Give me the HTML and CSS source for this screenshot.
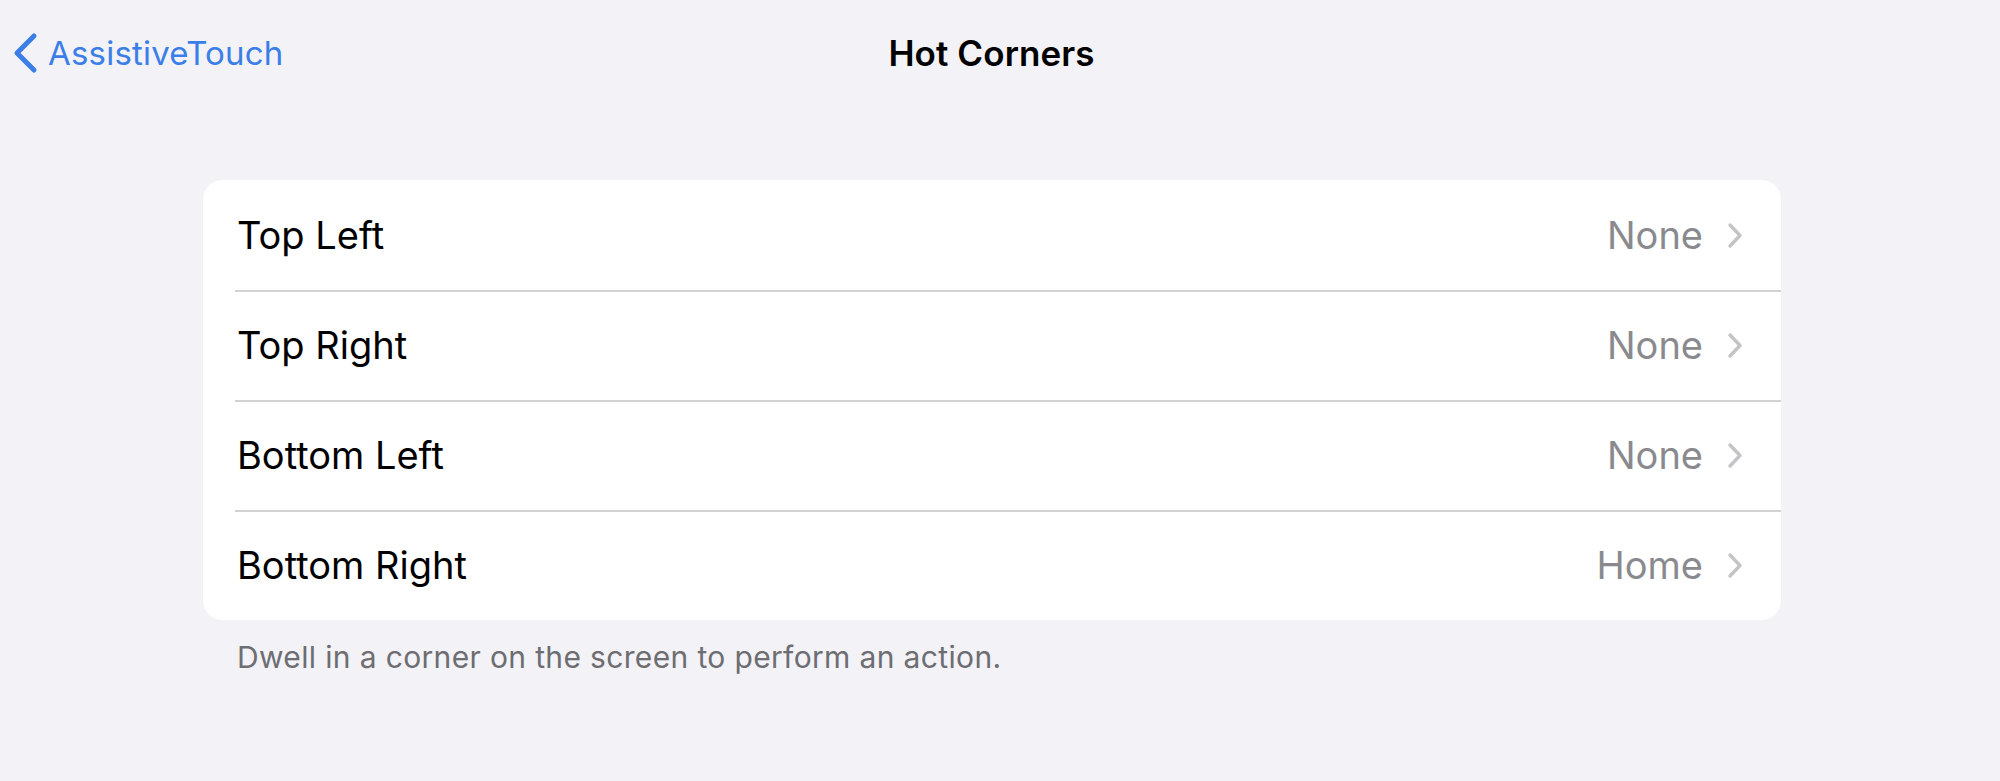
FILE: index.html
```html
<!DOCTYPE html>
<html>
<head>
<meta charset="utf-8">
<link rel="stylesheet" href="styles.css">
</head>
<body>
<header class="nav">
  <a class="back">
    <svg class="back-chev" width="26" height="42" viewBox="0 0 26 42"><path d="M22 4 L5 21 L22 38" fill="none" stroke="#3b7ee8" stroke-width="5" stroke-linecap="round" stroke-linejoin="round"/></svg>
    <span class="back-label">AssistiveTouch</span>
  </a>
  <h1 class="title">Hot Corners</h1>
</header>
<main class="content">
  <section class="card">
    <div class="row"><span class="label">Top Left</span><span class="value">None</span><svg class="chev" width="16" height="27" viewBox="0 0 16 27"><path d="M3 3 L13 13.5 L3 24" fill="none" stroke="#c4c4c7" stroke-width="3.4" stroke-linecap="round" stroke-linejoin="round"/></svg></div>
    <div class="row"><span class="label">Top Right</span><span class="value">None</span><svg class="chev" width="16" height="27" viewBox="0 0 16 27"><path d="M3 3 L13 13.5 L3 24" fill="none" stroke="#c4c4c7" stroke-width="3.4" stroke-linecap="round" stroke-linejoin="round"/></svg></div>
    <div class="row"><span class="label">Bottom Left</span><span class="value">None</span><svg class="chev" width="16" height="27" viewBox="0 0 16 27"><path d="M3 3 L13 13.5 L3 24" fill="none" stroke="#c4c4c7" stroke-width="3.4" stroke-linecap="round" stroke-linejoin="round"/></svg></div>
    <div class="row"><span class="label">Bottom Right</span><span class="value">Home</span><svg class="chev" width="16" height="27" viewBox="0 0 16 27"><path d="M3 3 L13 13.5 L3 24" fill="none" stroke="#c4c4c7" stroke-width="3.4" stroke-linecap="round" stroke-linejoin="round"/></svg></div>
  </section>
  <p class="footer">Dwell in a corner on the screen to perform an action.</p>
</main>
</body>
</html>
```
FILE: styles.css
```css
html, body {
  margin: 0;
  padding: 0;
  background: #f2f2f7;
  font-family: Inter, "Noto Sans", sans-serif;
  width: 2000px;
  height: 781px;
  overflow: hidden;
}
.nav {
  position: relative;
  height: 106px;
  display: flex;
  align-items: center;
  justify-content: center;
}
.back {
  position: absolute;
  left: 12px;
  top: 32px;
  display: flex;
  align-items: center;
  gap: 10px;
  color: #3b7ee8;
}
.back-chev { display: block; }
.back-label {
  font-size: 33px;
  letter-spacing: 0.2px;
  line-height: 42px;
}
.title {
  margin: 0 17px 0 0;
  font-size: 35px;
  font-weight: 600;
  color: #000;
  letter-spacing: 0.1px;
}
.content {
  padding: 74px 219px 0 203px;
}
.card {
  background: #fff;
  border-radius: 20px;
  overflow: hidden;
}
.row {
  height: 110px;
  display: flex;
  align-items: center;
  padding: 0 38px 0 34px;
  position: relative;
}
.row + .row::before {
  content: "";
  position: absolute;
  left: 32px;
  right: 0;
  top: 0;
  height: 1.5px;
  background: #d3d3d6;
}
.label {
  flex: 1;
  font-size: 38px;
  color: #000;
}
.value {
  font-size: 38px;
  color: #8a8a8e;
  margin-right: 24px;
}
.chev { display: block; }
.footer {
  margin: 19px 0 0 34px;
  font-size: 30px;
  letter-spacing: 0.35px;
  color: #6d6d72;
}
```
